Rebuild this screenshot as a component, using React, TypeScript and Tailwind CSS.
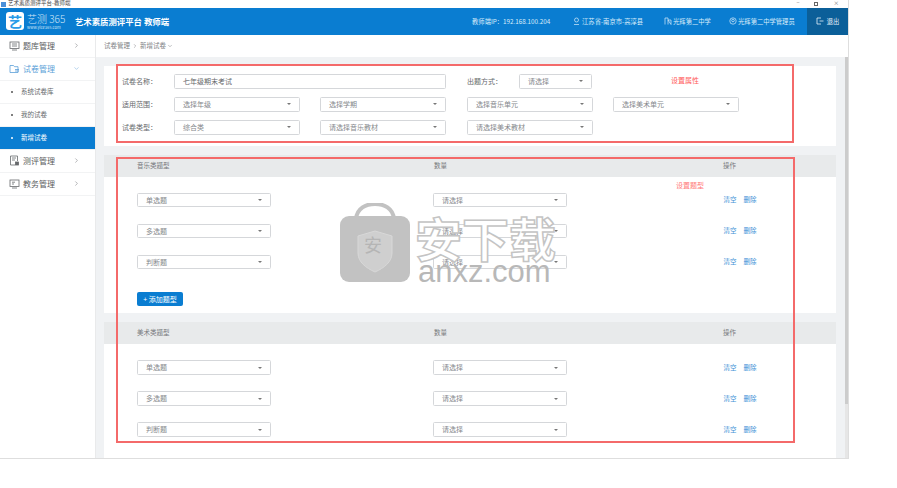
import type { ReactNode } from "react";
import { ChevronDown, ChevronRight } from "lucide-react";

const font = { fontFamily: '"Noto Sans CJK SC", "Noto Sans", sans-serif' };

const Select = ({ text, className = "" }: { text: string; className?: string }) => (
  <div
    className={`flex h-[14.5px] items-center justify-between rounded-[1.5px] border border-[#d5d7da] bg-white pl-[8px] pr-[8px] text-[7px] text-[#85888c] ${className}`}
  >
    <span>{text}</span>
    <span className="h-0 w-0 border-x-[2px] border-t-[2px] border-x-transparent border-t-[#777]" />
  </div>
);

const SideItem = ({ icon, label, open }: { icon: ReactNode; label: string; open?: boolean }) => (
  <div className={`flex h-[23px] items-center border-b border-[#f2f3f4] pl-[6px] ${open ? "text-[#5b9fd8]" : "text-[#5a5d60]"}`}>
    <span className="flex w-[16px] justify-center">{icon}</span>
    <span className="ml-[1px] w-[50px] text-[8px]">{label}</span>
    {open ? <ChevronDown size={7} strokeWidth={1.5} /> : <ChevronRight size={7} strokeWidth={1.5} />}
  </div>
);

const SubItem = ({ label, active }: { label: string; active?: boolean }) => (
  <div className={`flex h-[23px] items-center border-b border-[#f2f3f4] pl-[11px] text-[6.5px] ${active ? "bg-[#0a7dd1] text-white" : "text-[#66696c]"}`}>
    <span className={`mr-[8px] h-[2px] w-[2px] rounded-full ${active ? "bg-white" : "bg-[#555]"}`} />
    {label}
  </div>
);

const TypeRow = ({ label }: { label: string }) => (
  <div className="flex h-[31px] items-center pl-[33px]">
    <Select text={label} className="w-[133.5px]" />
    <Select text="请选择" className="ml-[162.5px] w-[133.5px]" />
    <span className="ml-[157px] text-[6.5px] text-[#3d8fd6]">清空</span>
    <span className="ml-[7px] text-[6.5px] text-[#3d8fd6]">删除</span>
  </div>
);

const TableHead = ({ title }: { title: string }) => (
  <div className="flex h-[22px] items-center bg-[#e8eaeb] pl-[33px] text-[6.5px] text-[#77797c]">
    <span className="w-[297px]">{title}</span>
    <span className="w-[289px]">数量</span>
    <span>操作</span>
  </div>
);

const Label = ({ text }: { text: string }) => (
  <span className="w-[52px] shrink-0 text-[7px] text-[#66696c]">{text}</span>
);

const IconDoc = () => (
  <svg width="11" height="10" viewBox="0 0 11 10" fill="none" stroke="#66696c" strokeWidth="0.8">
    <rect x="1" y="1" width="9" height="6.5" />
    <path d="M3 3h5M3 5h5M3 9h5" />
  </svg>
);

const IconFolder = () => (
  <svg width="11" height="10" viewBox="0 0 11 10" fill="none" stroke="#5b9fd8" strokeWidth="0.8">
    <path d="M1 1.5h3.5l1 1.2H9V8.5H1z" />
    <path d="M6 5.5h4M6 7h4" />
  </svg>
);

const IconCheck = () => (
  <svg width="11" height="11" viewBox="0 0 11 11" fill="none" stroke="#66696c" strokeWidth="0.8">
    <path d="M8.5 6V1H1.5v9H6" />
    <path d="M3 3h4M3 5h3" />
    <rect x="6.5" y="7" width="3" height="3" fill="#66696c" />
  </svg>
);

const IconScreen = () => (
  <svg width="11" height="10" viewBox="0 0 11 10" fill="none" stroke="#66696c" strokeWidth="0.8">
    <rect x="1" y="1" width="9" height="6.5" />
    <path d="M3 3.2h3M3 5h2M3 9h5" />
  </svg>
);

export default function App() {
  return (
    <div className="h-[488px] w-[897px] overflow-hidden bg-white" style={font}>
      <div className="relative flex h-[459px] w-[849px] flex-col border-b border-r border-[#dedede]">
        {/* Title bar */}
        <div className="flex h-[8px] items-center bg-white pr-[9px] text-[5.5px] leading-none text-[#444]">
          <span className="ml-[1px] h-[5px] w-[5px] bg-[#4a90d9]" />
          <span className="ml-[2px] flex-1">艺术素质测评平台-教师端</span>
          <span className="text-[#777]">−</span>
          <span className="ml-[15px] h-[4px] w-[4px] border border-[#666]" />
          <span className="ml-[15px] text-[#777]">×</span>
        </div>

        {/* Header */}
        <header className="flex h-[26.5px] items-center bg-[#0a7dd1] text-white">
          <div className="ml-[6px] flex h-[18px] w-[18px] items-center justify-center rounded-[3px] bg-white text-[14px] font-bold leading-none text-[#2a9be8]">
            艺
          </div>
          <div className="ml-[3px] w-[48px] leading-none">
            <div className="text-[10px] font-light text-[#cfe5f7]">艺测 365</div>
            <div className="mt-[1px] text-[4px] text-[#cfe5f7]">www.yice365.com</div>
          </div>
          <div className="text-[8.4px] font-bold">艺术素质测评平台 教师端</div>
          <div className="ml-[303px] flex items-center text-[6.3px] text-[#d9ecfa]">
            <span className="w-[101px] whitespace-nowrap">教师端IP：192.168.100.204</span>
            <svg width="7" height="8" viewBox="0 0 7 8" fill="none" stroke="#d9ecfa" strokeWidth="0.7">
              <circle cx="3.5" cy="3" r="2" />
              <path d="M1 7.5h5" />
            </svg>
            <span className="ml-[2px] w-[82px] whitespace-nowrap">江苏省-南京市-高淳县</span>
            <svg width="8" height="8" viewBox="0 0 8 8" fill="none" stroke="#d9ecfa" strokeWidth="0.7">
              <path d="M1 7.5V1h3v6.5M4 3h3v4.5z" />
            </svg>
            <span className="ml-[1px] w-[56px] whitespace-nowrap">光辉第二中学</span>
            <svg width="8" height="8" viewBox="0 0 8 8" fill="none" stroke="#d9ecfa" strokeWidth="0.7">
              <circle cx="4" cy="4" r="3.2" />
              <circle cx="4" cy="3.5" r="1.3" />
            </svg>
            <span className="ml-[1px] w-[69px] whitespace-nowrap">光辉第二中学管理员</span>
          </div>
          <div className="flex h-full flex-1 items-center justify-center gap-[3px] bg-[#0b5f99] text-[6.3px] text-[#e5f1fa]">
            <svg width="8" height="8" viewBox="0 0 8 8" fill="none" stroke="#e5f1fa" strokeWidth="0.8">
              <path d="M5 1H1v6h4M3.5 4h4" />
            </svg>
            退出
          </div>
        </header>

        <div className="flex min-h-0 flex-1">
          {/* Sidebar */}
          <aside className="w-[96px] shrink-0 border-r border-[#e9eaeb] bg-white">
            <SideItem icon={<IconDoc />} label="题库管理" />
            <SideItem icon={<IconFolder />} label="试卷管理" open />
            <SubItem label="系统试卷库" />
            <SubItem label="我的试卷" />
            <SubItem label="新增试卷" active />
            <SideItem icon={<IconCheck />} label="测评管理" />
            <SideItem icon={<IconScreen />} label="教务管理" />
          </aside>

          <div className="flex min-w-0 flex-1 flex-col bg-[#f0f2f4]">
            {/* Breadcrumb */}
            <div className="flex h-[22.5px] shrink-0 items-center bg-white pl-[8px] text-[6.5px] text-[#808386]">
              试卷管理
              <ChevronRight size={6} className="mx-[2px]" />
              新增试卷
              <ChevronDown size={6} className="ml-[1px]" />
            </div>

            <div className="flex min-h-0 flex-1">
              <main className="min-w-0 flex-1 pl-[8px] pt-[9px]">
                {/* Properties */}
                <section className="h-[80px] bg-white pl-[18px] pt-[8px]">
                  <div className="flex items-center">
                    <Label text="试卷名称：" />
                    <div className="flex h-[14.5px] w-[271.5px] items-center rounded-[1.5px] border border-[#d5d7da] pl-[8px] text-[7px] text-[#66696c]">
                      七年级期末考试
                    </div>
                    <span className="ml-[21.5px] w-[52px] text-[7px] text-[#66696c]">出题方式：</span>
                    <Select text="请选择" className="w-[73px]" />
                  </div>
                  <div className="mt-[8.5px] flex items-center">
                    <Label text="适用范围：" />
                    <Select text="选择年级" className="w-[125.5px]" />
                    <Select text="选择学期" className="ml-[20.5px] w-[125.5px]" />
                    <Select text="选择音乐单元" className="ml-[21.5px] w-[125.5px]" />
                    <Select text="选择美术单元" className="ml-[20.5px] w-[125.5px]" />
                  </div>
                  <div className="mt-[8.5px] flex items-center">
                    <Label text="试卷类型：" />
                    <Select text="综合类" className="w-[125.5px]" />
                    <Select text="请选择音乐教材" className="ml-[20.5px] w-[125.5px]" />
                    <Select text="请选择美术教材" className="ml-[21.5px] w-[125.5px]" />
                  </div>
                </section>

                {/* Music */}
                <section className="mt-[9px] h-[158px] bg-white">
                  <TableHead title="音乐类题型" />
                  <div className="pt-[7.5px]">
                    <TypeRow label="单选题" />
                    <TypeRow label="多选题" />
                    <TypeRow label="判断题" />
                  </div>
                  <button className="ml-[33px] mt-[14.5px] h-[14px] w-[46px] rounded-[2px] bg-[#0a7dd1] text-[7px] text-white">
                    + 添加题型
                  </button>
                </section>

                {/* Art */}
                <section className="mt-[9px] h-[136px] bg-white">
                  <TableHead title="美术类题型" />
                  <div className="pt-[8px]">
                    <TypeRow label="单选题" />
                    <TypeRow label="多选题" />
                    <TypeRow label="判断题" />
                  </div>
                </section>
              </main>

              {/* Scrollbar */}
              <div className="w-[12px] shrink-0 border-l-[9px] border-[#f0f2f4] bg-[#e6e6e6]">
                <div className="h-[347px] bg-[#cccccc]" />
              </div>
            </div>
          </div>
        </div>

        {/* Red annotation boxes */}
        <div className="absolute left-[116px] top-[64px] h-[79px] w-[678px] border-2 border-[#f46a6a]" />
        <div className="absolute left-[116px] top-[157px] h-[286px] w-[678.5px] border-2 border-[#f46a6a]" />
        <span className="absolute left-[671px] top-[75px] text-[7px] text-[#ff5a5a]">设置属性</span>
        <span className="absolute left-[676px] top-[180px] text-[7px] text-[#ff7a7a]">设置题型</span>

        {/* Watermark */}
        <svg className="absolute left-[340px] top-[203px]" width="71" height="80" viewBox="0 0 71 80">
          <path d="M16 16C17 5 26 1 35 1s18 4 19 15" fill="none" stroke="#c2c2c2" strokeWidth="4" />
          <rect x="0" y="13" width="70" height="66" rx="9" fill="#c2c2c2" />
          <path d="M35 28l17 5v17c0 9-8 15-17 19-9-4-17-10-17-19V33z" fill="#cfcfcf" stroke="#d8d8d8" />
        </svg>
        <span className="absolute left-[364px] top-[235px] text-[18px] leading-none text-[#b5b5b5]">安</span>
        <span className="absolute left-[415px] top-[209px] whitespace-nowrap text-[47px] font-bold leading-[56px] text-white [-webkit-text-stroke:1.5px_#c4c4c4]">
          安下载
        </span>
        <span className="absolute left-[418px] top-[255px] text-[31px] leading-[34px] text-[#b8b8b8]" style={{ fontFamily: '"Liberation Sans", sans-serif' }}>
          anxz.com
        </span>
      </div>
    </div>
  );
}
